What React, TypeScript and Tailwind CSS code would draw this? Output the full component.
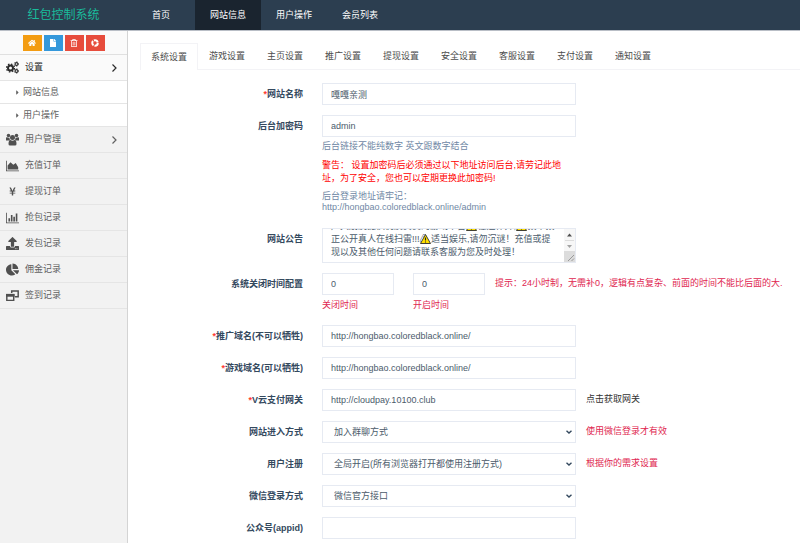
import { useEffect, useRef } from "react";
import {
  FaCaretRight,
  FaChartPie,
  FaFile,
  FaHome,
  FaRegTrashAlt,
  FaUpload,
  FaYenSign,
} from "react-icons/fa";

const topLinks = ["首页", "网站信息", "用户操作", "会员列表"];

const tabs = [
  "系统设置",
  "游戏设置",
  "主页设置",
  "推广设置",
  "提现设置",
  "安全设置",
  "客服设置",
  "支付设置",
  "通知设置",
];

const shortcuts = [
  { label: "首页", icon: FaHome, color: "bg-[#f39c12]" },
  { label: "文档", icon: FaFile, color: "bg-[#3498db]" },
  { label: "删除", icon: FaRegTrashAlt, color: "bg-[#e74c3c]" },
  { label: "清理缓存", icon: RecycleIcon, color: "bg-[#e74c3c]" },
];

const menu = [
  { label: "用户管理", icon: UsersIcon, more: true },
  { label: "充值订单", icon: AreaIcon },
  { label: "提现订单", icon: FaYenSign, small: true },
  { label: "抢包记录", icon: BarsIcon },
  { label: "发包记录", icon: FaUpload },
  { label: "佣金记录", icon: FaChartPie },
  { label: "签到记录", icon: WindowsIcon },
];

const notice =
  "广大朋友提供优质负责的游戏平台⚠ 在运作开,⚠ 拨平拨正公开真人在线扫雷!!!⚠ 适当娱乐,请勿沉谜！充值或提现以及其他任何问题请联系客服为您及时处理！";

const fieldClass =
  "block h-[22px] w-full border border-[#e6eaf2] bg-white px-2 text-[9px] text-[#4b5b6b] outline-none";

type IconProps = { className?: string };

function CogsIcon({ className }: IconProps) {
  return (
    <svg viewBox="0 0 26 26" fill="none" stroke="currentColor" className={className}>
      <circle cx="9" cy="14" r="5" strokeWidth="4" />
      <circle cx="9" cy="14" r="8" strokeWidth="2.500" strokeDasharray="3.140 3.140" />
      <circle cx="21" cy="6" r="2.800" strokeWidth="2.200" />
      <circle cx="21" cy="6" r="4.500" strokeWidth="1.500" strokeDasharray="2.350 2.350" />
      <circle cx="21" cy="20" r="2.800" strokeWidth="2.200" />
      <circle cx="21" cy="20" r="4.500" strokeWidth="1.500" strokeDasharray="2.350 2.350" />
    </svg>
  );
}

function UsersIcon({ className }: IconProps) {
  return (
    <svg viewBox="0 0 26 24" fill="currentColor" className={className}>
      <circle cx="5" cy="4" r="3.500" />
      <circle cx="21" cy="4" r="3.500" />
      <circle cx="13" cy="8" r="5" />
      <path d="M0 14V9q0-2 2-1.500 3 1.500 5 .5-.5 4 2 6zM26 14V9q0-2-2-1.500-3 1.500-5 .5.500 4-2 6z" />
      <path d="M5 21q0-8 4-8 4 2.500 8 0 4 0 4 8 0 3-3 3H8q-3 0-3-3z" />
    </svg>
  );
}

function AreaIcon({ className }: IconProps) {
  return (
    <svg viewBox="0 0 16 14" fill="currentColor" className={className}>
      <path d="M0 1h1v12h15v1H0zM2 12V7l3.500-4L9 6l3-2 3 5v3z" />
    </svg>
  );
}

function BarsIcon({ className }: IconProps) {
  return (
    <svg viewBox="0 0 16 14" fill="currentColor" className={className}>
      <path d="M0 1h1v12h15v1H0zM3 8h2v4H3zM6 4h2v8H6zM9 6h2v6H9zM12 2h2v10h-2z" />
    </svg>
  );
}

function WindowsIcon({ className }: IconProps) {
  return (
    <svg viewBox="0 0 16 14" className={className}>
      <path
        d="M7 4V1.500h8v7h-4M1 6h8.500v7H1z"
        fill="none"
        stroke="currentColor"
        strokeWidth="1.800"
      />
      <path d="M0 5h10.500v3.500H0z" fill="currentColor" />
    </svg>
  );
}

function RecycleIcon({ className }: IconProps) {
  return (
    <svg viewBox="0 0 16 16" fill="none" stroke="currentColor" className={className}>
      <circle cx="8" cy="8" r="5.500" strokeWidth="4" strokeDasharray="9.500 2.020" />
    </svg>
  );
}

function AngleIcon() {
  return (
    <svg viewBox="0 0 10 10" fill="none" stroke="currentColor" strokeWidth="1.200" className="size-2.5">
      <path d="M3.500 1.500L7 5 3.500 8.500" />
    </svg>
  );
}

function WarningIcon({ className }: IconProps) {
  return (
    <svg viewBox="0 0 22 20" className={className}>
      <path d="M11 1L21 19H1z" fill="#ffe000" stroke="#2b2b2b" strokeWidth="1.800" strokeLinejoin="round" />
      <path d="M11 7v6M11 15v2" stroke="#222" strokeWidth="2.200" />
    </svg>
  );
}

function Row({
  id,
  label,
  required,
  hint,
  children,
}: {
  id: string;
  label: string;
  required?: boolean;
  hint?: React.ReactNode;
  children: React.ReactNode;
}) {
  return (
    <div className="flex items-start gap-[10px]">
      <label
        htmlFor={id}
        className="w-[166px] shrink-0 pt-[5px] pr-[9px] text-right font-bold text-[#34495e]"
      >
        {required && <span className="text-[#ff3b30]">*</span>}
        {label}
      </label>
      <div className="w-[254px] shrink-0">{children}</div>
      {hint && <div className="min-w-0 pt-1">{hint}</div>}
    </div>
  );
}

function SelectField({ id, value }: { id: string; value: string }) {
  return (
    <div className="relative">
      <select
        id={id}
        className="block h-[22px] w-full appearance-none border border-[#e6eaf2] bg-white pr-4 pl-[11px] text-[9px] text-[#4b5b6b] outline-none"
      >
        <option>{value}</option>
      </select>
      <svg
        viewBox="0 0 12 8"
        fill="none"
        stroke="#34495e"
        strokeWidth="2.800"
        className="pointer-events-none absolute top-[9px] right-1 h-1 w-1.5"
      >
        <path d="M1 1.500l5 4.500 5-4.500" />
      </svg>
    </div>
  );
}

function NoticeField() {
  const ref = useRef<HTMLTextAreaElement>(null);

  // open on the last lines of the notice
  useEffect(() => {
    if (ref.current) ref.current.scrollTop = ref.current.scrollHeight;
  }, []);

  return (
    <div className="relative flex h-[35px] overflow-hidden border border-[#e6eaf2]">
      <textarea
        id="notice"
        ref={ref}
        defaultValue={notice}
        className="block h-full min-w-0 flex-1 resize-none overflow-hidden pt-1 pr-2 pb-[3px] pl-2 text-[9px] leading-[13px] break-all text-[#4b5b6b] outline-none"
      />
      <WarningIcon className="absolute -top-2 left-[143px] h-2.5 w-[11px]" />
      <WarningIcon className="absolute -top-2 left-[193px] h-2.5 w-[11px]" />
      <WarningIcon className="absolute top-[5px] left-[97px] h-2.5 w-[11px]" />
      <svg viewBox="0 0 11 33" className="h-[33px] w-[11px] shrink-0">
        <path d="M0 0h11v33H0z" fill="#f7f7f7" />
        <path d="M1 11h9v1H1z" fill="#dcdcdc" />
        <path d="M3 7.500h5L5.500 4.500z" fill="#505050" />
        <path d="M3 16h5L5.500 19z" fill="#a3a3a3" />
        <path d="M0 22h11v11H0z" fill="#dcdcdc" />
        <path d="M4 32l6-6M7.500 32L10 29.500" stroke="#888" strokeWidth=".8" />
      </svg>
    </div>
  );
}

export default function App() {
  return (
    <div className="flex min-h-screen flex-col bg-white font-['Liberation_Sans','Noto_Sans_CJK_SC',sans-serif] text-[9px] leading-[13px]">
      <header className="flex h-[31px] shrink-0 border-b border-[#b9bec6] bg-[#2c3e50] text-white">
        <a href="#" className="flex w-[127px] items-center justify-center text-[12px] text-[#1abc9c]">
          红包控制系统
        </a>
        <nav className="flex">
          {topLinks.map((link, i) => (
            <a
              key={link}
              href="#"
              className={`flex items-center ${i === 0 ? "px-[25px]" : "px-[15px]"} ${i === 1 ? "bg-[#1a242f]" : ""}`}
            >
              {link}
            </a>
          ))}
        </nav>
      </header>

      <div className="flex flex-1">
        <aside className="w-[128px] shrink-0 border-r border-[#d4d4d4] bg-[#f2f2f2] text-[#616161]">
          <div className="flex h-6 items-center justify-center gap-0.5 border-b border-[#e0e0e0] bg-[#fafafa]">
            {shortcuts.map(({ label, icon: Icon, color }) => (
              <button
                key={label}
                aria-label={label}
                className={`flex h-4 w-[19px] items-center justify-center text-white ${color}`}
              >
                <Icon className="size-2" />
              </button>
            ))}
          </div>
          <a
            href="#"
            className="flex h-[26px] items-center border-b border-[#e5e5e5] bg-[#fafafa] pr-2 pl-[6px] text-[#2b2b2b]"
          >
            <CogsIcon className="mr-[6px] size-[13px]" />
            <span className="flex-1">设置</span>
            <AngleIcon />
          </a>
          {["网站信息", "用户操作"].map((item) => (
            <a
              key={item}
              href="#"
              className="flex h-[23px] items-center border-b border-[#e5e5e5] bg-white pl-[14px]"
            >
              <FaCaretRight className="mr-0.5 size-[7px]" />
              {item}
            </a>
          ))}
          {menu.map(({ label, icon: Icon, more, small }) => (
            <a
              key={label}
              href="#"
              className="flex h-[26px] items-center border-b border-[#e5e5e5] pr-2 pl-[6px]"
            >
              <span className="mr-[6px] flex w-[13px] justify-center text-[#505050]">
                <Icon className={small ? "size-[9px]" : "size-[13px]"} />
              </span>
              <span className="flex-1">{label}</span>
              {more && <AngleIcon />}
            </a>
          ))}
        </aside>

        <main className="min-w-0 flex-1 pt-3 pl-3">
          <nav className="flex h-[27px] border-b border-[#f3f3f6] text-[#4c4c4c]">
            {tabs.map((tab, i) => (
              <a
                key={tab}
                href="#"
                className={`flex w-[58px] shrink-0 items-center justify-center ${
                  i === 0 ? "-mb-px border border-b-0 border-[#f3f3f6] bg-white" : ""
                }`}
              >
                {tab}
              </a>
            ))}
          </nav>

          <form className="flex flex-col gap-[10px] pt-[13px] pl-[6px]">
            <Row id="name" label="网站名称" required>
              <input id="name" defaultValue="嘎嘎亲测" className={fieldClass} />
            </Row>
            <Row id="code" label="后台加密码">
              <input id="code" defaultValue="admin" className={fieldClass} />
              <p className="mt-[3px] text-[#7088a5]">后台链接不能纯数字 英文跟数字结合</p>
              <p className="mt-[6px] text-[#ff0000]">
                警告： 设置加密码后必须通过以下地址访问后台,请劳记此地址，为了安全，您也可以定期更换此加密码!
              </p>
              <p className="mt-[6px] mb-[5px] leading-[11px] text-[#7088a5]">
                后台登录地址请牢记：
                <br />
                http://hongbao.coloredblack.online/admin
              </p>
            </Row>
            <Row id="notice" label="网站公告">
              <NoticeField />
            </Row>
            <Row id="close" label="系统关闭时间配置">
              <div className="mb-[3px] flex w-[470px] items-start">
                <div className="mr-[19px] w-[72px]">
                  <input id="close" defaultValue="0" className={fieldClass} />
                  <label htmlFor="close" className="mt-1 block text-[#e0264f]">
                    关闭时间
                  </label>
                </div>
                <div className="mr-[10px] w-[72px]">
                  <input id="open" defaultValue="0" className={fieldClass} />
                  <label htmlFor="open" className="mt-1 block text-[#e0264f]">
                    开启时间
                  </label>
                </div>
                <span className="pt-1 text-[#e0264f]">
                  提示：24小时制，无需补0，逻辑有点复杂、前面的时间不能比后面的大.
                </span>
              </div>
            </Row>
            <Row id="promo" label="推广域名(不可以牺牲)" required>
              <input id="promo" defaultValue="http://hongbao.coloredblack.online/" className={fieldClass} />
            </Row>
            <Row id="game" label="游戏域名(可以牺牲)" required>
              <input id="game" defaultValue="http://hongbao.coloredblack.online/" className={fieldClass} />
            </Row>
            <Row
              id="gateway"
              label="V云支付网关"
              required
              hint={
                <a href="#" className="text-[#333]">
                  点击获取网关
                </a>
              }
            >
              <input id="gateway" defaultValue="http://cloudpay.10100.club" className={fieldClass} />
            </Row>
            <Row id="entry" label="网站进入方式" hint={<span className="text-[#e0264f]">使用微信登录才有效</span>}>
              <SelectField id="entry" value="加入群聊方式" />
            </Row>
            <Row id="register" label="用户注册" hint={<span className="text-[#e0264f]">根据你的需求设置</span>}>
              <SelectField id="register" value="全局开启(所有浏览器打开都使用注册方式)" />
            </Row>
            <Row id="wechat" label="微信登录方式">
              <SelectField id="wechat" value="微信官方接口" />
            </Row>
            <Row id="appid" label="公众号(appid)">
              <input id="appid" className={fieldClass} />
            </Row>
          </form>
        </main>
      </div>
    </div>
  );
}
